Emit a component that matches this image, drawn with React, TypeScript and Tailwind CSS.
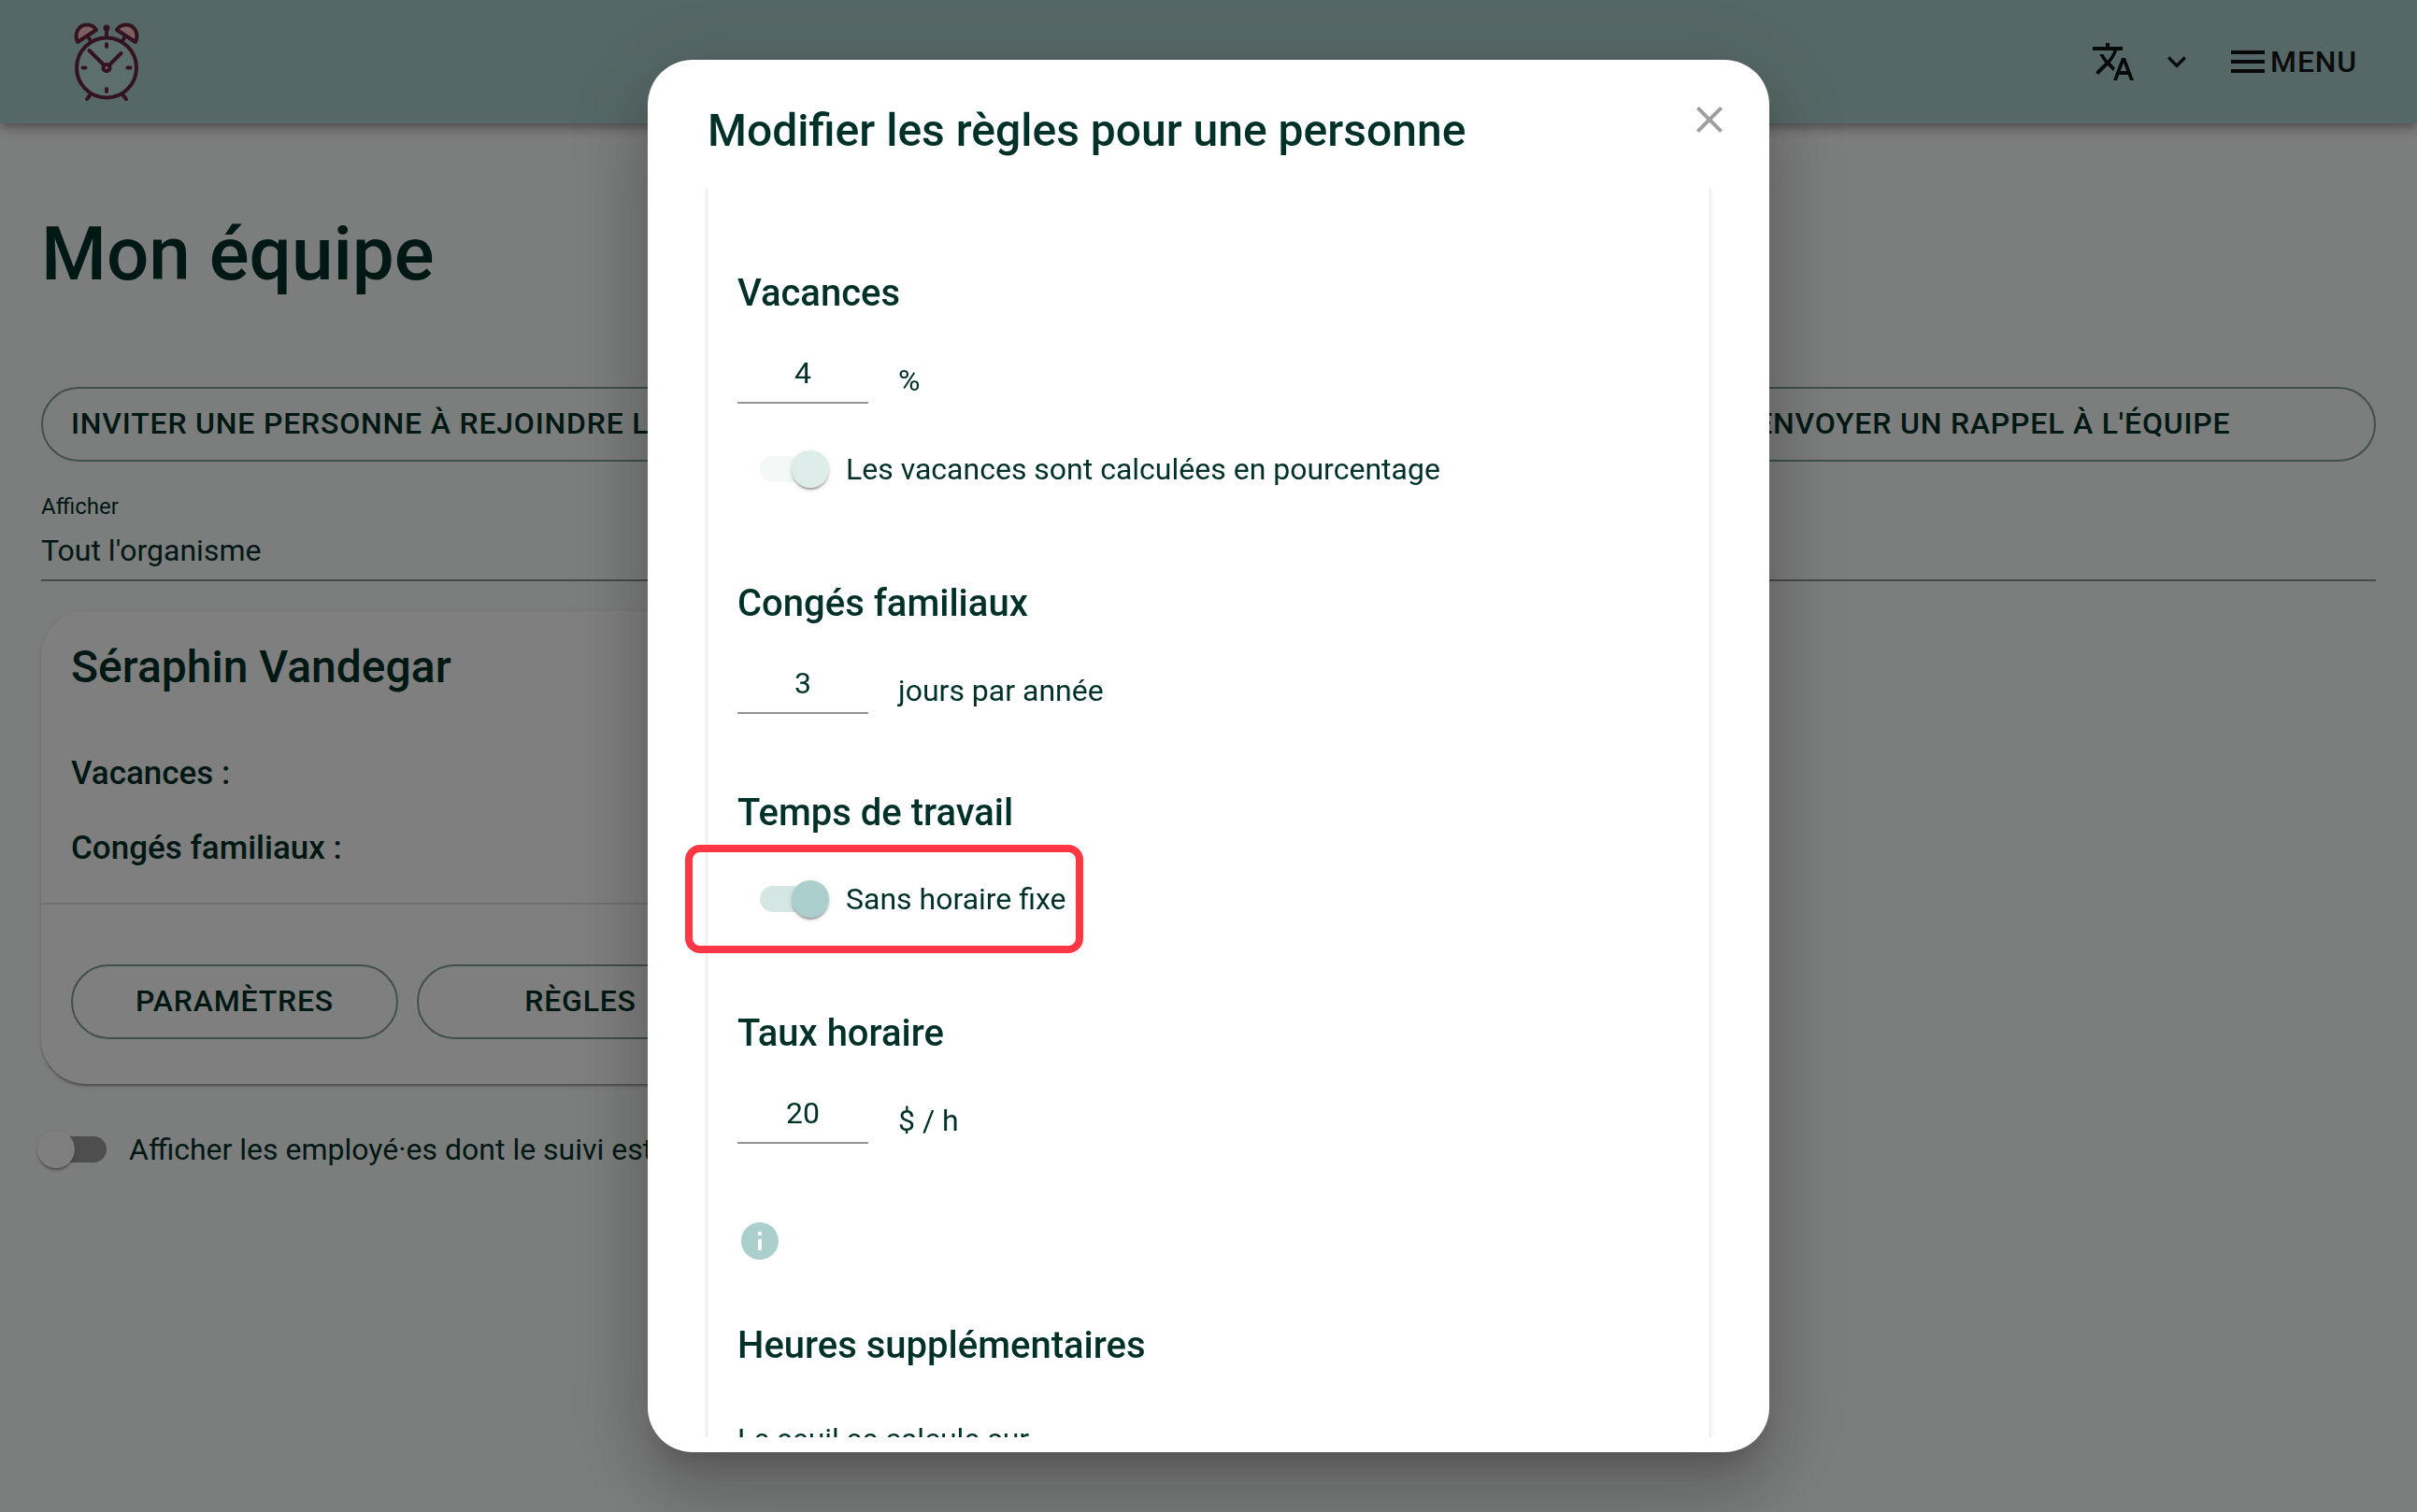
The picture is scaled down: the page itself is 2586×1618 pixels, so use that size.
import { useState } from "react";

const ripple = "shadow-[0_4px_2px_-2px_rgba(0,0,0,0.2),0_2px_2px_0_rgba(0,0,0,0.14),0_2px_6px_0_rgba(0,0,0,0.12)]";

function ClockLogo() {
    return (
        <svg className="w-20 h-24" viewBox="74 18 80 96" fill="none" stroke="#66263f" strokeWidth="4" strokeLinecap="round" strokeLinejoin="round">
            <path d="M98 45l-4-6M130 45l4-6" />
            <path d="M97 101l-4 5M131 101l4 5" />
            <circle cx="114" cy="72.500" r="32" fill="#b8dfd6" />
            <path d="M83 45C79 36 84 26.500 93 26.500C98 26.500 101 28.500 103 32Z" fill="#ffc0c4" />
            <path d="M145 45C149 36 144 26.500 135 26.500C130 26.500 127 28.500 125 32Z" fill="#ffc0c4" />
            <path d="M114 40V30" />
            <circle cx="114" cy="30" r="1.500" />
            <path d="M114 47v3M114 95v3M88.500 72.500h3M136.500 72.500h3" />
            <path d="M111 69.500L95.500 54M117 69.500L129.500 57" />
            <circle cx="114" cy="72.500" r="3.500" fill="#ffc0c4" />
        </svg>
    );
}

function Header() {
    return (
        <header className="relative h-[132px] pl-[74px] pr-16 bg-[#abcfcd] text-black/90 flex items-center justify-between shadow-[0_4px_8px_-2px_rgba(0,0,0,0.2),0_8px_10px_0_rgba(0,0,0,0.14),0_2px_20px_0_rgba(0,0,0,0.12)]">
            <a href="#" aria-label="Accueil">
                <ClockLogo />
            </a>
            <div className="flex items-center gap-8">
                <button type="button" aria-label="Langue" className="flex items-center gap-6">
                    <svg className="size-12" viewBox="0 0 24 24" fill="currentColor">
                        <path d="m12.870 15.070-2.540-2.510.030-.030c1.740-1.940 2.980-4.170 3.710-6.530H17V4h-7V2H8v2H1v1.990h11.170C11.500 7.920 10.440 9.750 9 11.350 8.070 10.320 7.300 9.190 6.690 8h-2c.730 1.630 1.730 3.170 2.980 4.560l-5.090 5.020L4 19l5-5 3.110 3.110zM18.500 10h-2L12 22h2l1.120-3h4.750L21 22h2zm-2.620 7 1.620-4.330L19.120 17z" />
                    </svg>
                    <svg className="size-10" viewBox="0 0 24 24" fill="currentColor">
                        <path d="M16.590 8.590 12 13.170 7.410 8.590 6 10l6 6 6-6z" />
                    </svg>
                </button>
                <button type="button" className="flex items-center text-[32px] leading-[56px] font-medium tracking-wide">
                    <svg className="size-12" viewBox="0 0 24 24" fill="currentColor">
                        <path d="M3 18h18v-2H3zm0-5h18v-2H3zm0-7v2h18V6z" />
                    </svg>
                    MENU
                </button>
            </div>
        </header>
    );
}

type SwitchProps = { label: string; checked?: boolean; disabled?: boolean; gap: string };

function Switch({ label, checked = false, disabled = false, gap }: SwitchProps) {
    const [on, setOn] = useState(checked);

    return (
        <label className={`flex items-center h-10 w-fit text-[32px] leading-[48px] whitespace-nowrap ${gap}`}>
            <span className="relative w-[74px] h-10 shrink-0 flex items-center">
                <input type="checkbox" className="peer sr-only" checked={on} disabled={disabled} onChange={() => setOn(!on)} />
                <span className={`w-[68px] h-7 rounded-full ${on ? (disabled ? "bg-[#f4f9f8]" : "bg-[#d5e7e5]") : "ml-[6px] bg-[#9c9c9c]"}`} />
                <span className={`absolute top-0 size-10 rounded-full ${ripple} ${on ? "right-0" : "left-0"} ${on ? (disabled ? "bg-[#deecea]" : "bg-[#abcfcc]") : "bg-white"}`} />
            </span>
            {label}
        </label>
    );
}

function OutlineButton({ children, className = "" }: { children: string; className?: string }) {
    return (
        <button type="button" className={`h-20 pb-0.5 border-2 border-[#80a096] rounded-full text-[32px] leading-[56px] font-medium uppercase tracking-wide whitespace-nowrap ${className}`}>
            {children}
        </button>
    );
}

function Team() {
    return (
        <main className="px-[44px]">
            <h1 className="pt-[98px] text-[80px] leading-[84px] font-medium">Mon équipe</h1>

            <div className="mt-[100px] grid grid-cols-3 gap-5">
                <OutlineButton className="px-[30px] text-left">Inviter une personne à rejoindre l'équipe</OutlineButton>
                <OutlineButton className="col-start-3">Envoyer un rappel à l'équipe</OutlineButton>
            </div>

            <div className="mt-8 flex flex-col">
                <label htmlFor="filter" className="text-[24px] leading-[32px]">Afficher</label>
                <select id="filter" className="h-16 appearance-none border-b-2 border-black/42 text-[32px] outline-none">
                    <option>Tout l'organisme</option>
                </select>
            </div>

            <section className={`mt-8 w-1/2 bg-white rounded-[48px] ${ripple}`}>
                <div className="px-8 pt-8 pb-[34px] border-b-2 border-black/12">
                    <h2 className="text-[48px] leading-[56px] font-medium">Séraphin Vandegar</h2>
                    <p className="mt-[62px] text-[35px] leading-[48px] font-medium">Vacances :</p>
                    <p className="mt-8 text-[35px] leading-[48px] font-medium">Congés familiaux :</p>
                </div>
                <div className="px-8 pt-16 pb-12 flex gap-5">
                    <OutlineButton className="w-[350px]">Paramètres</OutlineButton>
                    <OutlineButton className="w-[350px]">Règles</OutlineButton>
                </div>
            </section>

            <div className="mt-[50px] -ml-1">
                <Switch label="Afficher les employé·es dont le suivi est terminé" gap="gap-6" />
            </div>
        </main>
    );
}

function Amount({ id, label, value, unit }: { id: string; label: string; value: string; unit: string }) {
    return (
        <div className="mt-[26px] flex items-end gap-8 text-[32px]">
            <input id={id} aria-label={label} defaultValue={value} className="w-[140px] h-16 border-b-2 border-black/42 text-center outline-none" />
            <label htmlFor={id} className="leading-[50px]">{unit}</label>
        </div>
    );
}

function Title({ children }: { children: string }) {
    return <h3 className="text-[40px] leading-[56px] font-medium">{children}</h3>;
}

function RulesDialog() {
    return (
        <div className="fixed inset-0 p-16 bg-black/50 flex justify-center">
            <div role="dialog" aria-labelledby="dialog-title" className="relative w-[1200px] max-w-full pt-12 pb-4 bg-white rounded-[48px] flex flex-col shadow-[0_22px_30px_-14px_rgba(0,0,0,0.2),0_48px_76px_6px_rgba(0,0,0,0.14),0_18px_92px_16px_rgba(0,0,0,0.12)]">
                <div className="h-[88px] px-16 flex items-start justify-between">
                    <h2 id="dialog-title" className="text-[48px] leading-[56px] font-medium">Modifier les règles pour une personne</h2>
                    <button type="button" aria-label="Fermer" className="-mr-6 -mt-2 text-[#9e9e9e]">
                        <svg className="size-12" viewBox="0 0 24 24" fill="currentColor">
                            <path d="M19 6.410 17.590 5 12 10.590 6.410 5 5 6.410 10.590 12 5 17.590 6.410 19 12 13.410 17.590 19 19 17.590 13.410 12z" />
                        </svg>
                    </button>
                </div>

                <div className="flex-1 min-h-0 px-16 overflow-hidden">
                    <div className={`px-8 pt-[86px] pb-16 ${ripple}`}>
                        <Title>Vacances</Title>
                        <Amount id="vacation" label="Vacances" value="4" unit="%" />
                        <div className="mt-[50px] ml-6">
                            <Switch label="Les vacances sont calculées en pourcentage" checked disabled gap="gap-[18px]" />
                        </div>

                        <div className="mt-24">
                            <Title>Congés familiaux</Title>
                            <Amount id="family" label="Congés familiaux" value="3" unit="jours par année" />
                        </div>

                        <div className="mt-[78px]">
                            <Title>Temps de travail</Title>
                            <div className="relative mt-[44px] ml-6">
                                <Switch label="Sans horaire fixe" checked gap="gap-[18px]" />
                                <div className="absolute -left-20 -top-[38px] w-[426px] h-[116px] border-8 border-[#ff3744] rounded-2xl pointer-events-none" />
                            </div>
                        </div>

                        <div className="mt-24">
                            <Title>Taux horaire</Title>
                            <Amount id="rate" label="Taux horaire" value="20" unit="$ / h" />
                        </div>

                        <button type="button" aria-label="Information" className="mt-20 block text-[#abcfcc]">
                            <svg className="size-12" viewBox="0 0 24 24" fill="currentColor">
                                <path d="M12 2C6.480 2 2 6.480 2 12s4.480 10 10 10 10-4.480 10-10S17.520 2 12 2m1 15h-2v-6h2zm0-8h-2V7h2z" />
                            </svg>
                        </button>

                        <div className="mt-[60px]">
                            <Title>Heures supplémentaires</Title>
                            <p className="mt-12 text-[32px] leading-[48px]">Le seuil se calcule sur</p>
                        </div>
                    </div>
                </div>
            </div>
        </div>
    );
}

export default function App() {
    return (
        <div className="min-h-screen bg-[#f9fbfa] text-[#003128] font-[Roboto,sans-serif]">
            <Header />
            <Team />
            <RulesDialog />
        </div>
    );
}
